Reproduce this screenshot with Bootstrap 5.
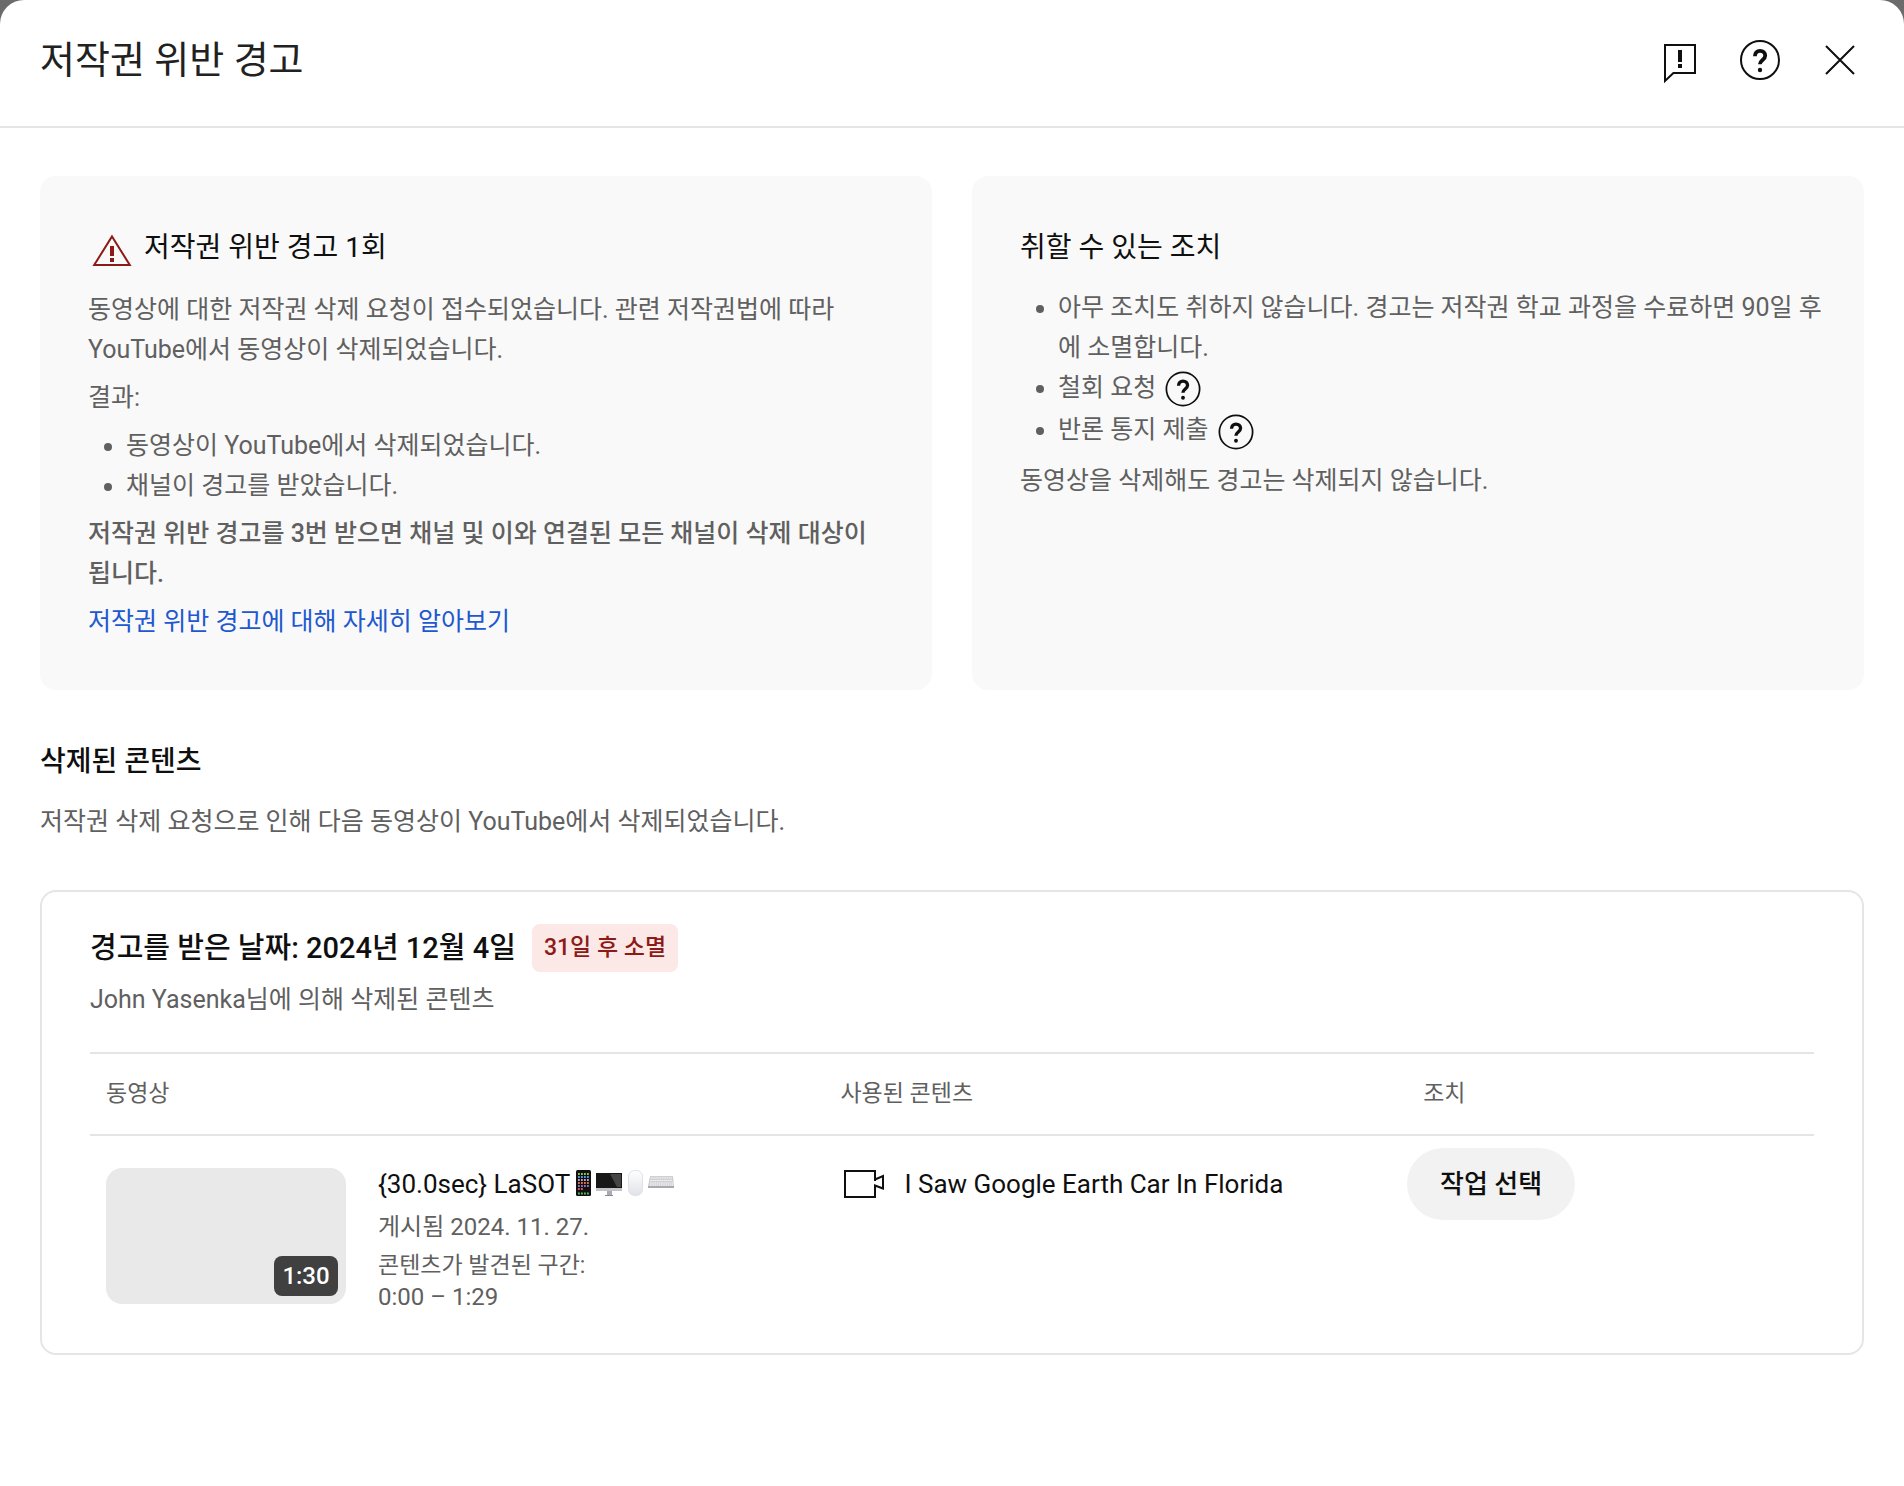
<!DOCTYPE html>
<html lang="ko">
<head>
<meta charset="utf-8">
<meta name="viewport" content="width=device-width, initial-scale=1">
<title>저작권 위반 경고</title>
<link href="https://cdn.jsdelivr.net/npm/bootstrap@5.3.0/dist/css/bootstrap.min.css" rel="stylesheet">
<style>
  body { background: #6b6b6b; color: #0f0f0f; font-family: Roboto, "Noto Sans CJK KR", sans-serif; font-size: 25px; line-height: 40px; }
  .sheet { background: #fff; border-radius: 24px 24px 0 0; }
  .sheet-head { padding: 36px 40px 42px; border-bottom: 2px solid #e5e5e5; }
  .sheet-title { font-size: 38px; line-height: 48px; font-weight: 400; color: #212121; }
  .sheet-body { padding: 48px 40px; }
  .head-tools { gap: 32px; }
  .icon-btn { width: 48px; height: 48px; color: #0f0f0f; }
  .icon-btn svg, .warn-icon { width: 48px; height: 48px; display: block; }
  .warn-icon { color: #8c1a17; }
  .info-grid { gap: 40px; }
  .panel { flex: 1 1 0; min-width: 0; background: #f9f9f9; border-radius: 16px; padding: 48px 32px 48px 48px; color: #606060; }
  .panel-title { font-size: 28px; line-height: 48px; font-weight: 400; color: #0f0f0f; margin-bottom: 16px; }
  .panel-title.with-icon { margin-bottom: 18px; }
  .panel p, .panel ul { margin-bottom: 8px; }
  .panel ul { padding-left: 38px; }
  .panel strong { font-weight: 500; }
  .more-link { color: #2158d0; }
  .help-link { display: inline-block; width: 42px; height: 42px; vertical-align: middle; color: #0f0f0f; }
  .help-link svg { width: 42px; height: 42px; display: block; }
  .section-title { font-size: 28px; line-height: 48px; font-weight: 500; margin: 48px 0 16px; }
  .soft { color: #606060; }
  .strike-card { margin-top: 48px; border: 2px solid #e5e5e5; border-radius: 16px; padding: 32px 48px 0; }
  .strike-date { font-size: 29px; line-height: 48px; font-weight: 500; }
  .expire-tag { font-size: 23px; line-height: 48px; font-weight: 500; color: #8c1a17; background: #fce8e6; border-radius: 8px; padding: 0 12px; }
  .claims { margin: 32px 0 0; table-layout: fixed; --bs-table-bg: transparent; }
  .claims > thead > tr > th { padding: 20px 16px; border: 0 solid #e5e5e5; border-width: 2px 0; font-size: 23px; line-height: 40px; font-weight: 400; color: #606060; }
  .claims > tbody > tr > td { border: 0; padding: 32px 16px 44px; }
  .claims > tbody > tr > td.act-cell { padding: 12px 0; }
  .thumb { width: 240px; height: 136px; background: #e9e9e9; border-radius: 16px; }
  .thumb-time { right: 8px; bottom: 8px; width: 64px; line-height: 40px; font-size: 24px; font-weight: 500; background: #404040; color: #fff; border-radius: 8px; }
  .vid-title { font-size: 26px; line-height: 32px; color: #0f0f0f; }
  .emoji { width: 26px; height: 26px; margin-top: 2px; flex: none; }
  .vid-date { font-size: 24px; margin-top: 7px; }
  .vid-note { font-size: 23px; line-height: 38px; }
  .vid-range { font-size: 24px; line-height: 24px; }
  .cam-icon { width: 48px; height: 32px; flex: none; }
  .act-btn { min-width: 168px; font-size: 26px; line-height: 72px; font-weight: 500; padding: 0 32px; border: 0; background: #f2f2f2; color: #0f0f0f; }
</style>
</head>
<body>
<svg class="d-none" xmlns="http://www.w3.org/2000/svg">
  <symbol id="i-help" viewBox="0 0 48 48">
    <circle cx="24" cy="24" r="19" fill="none" stroke="currentColor" stroke-width="2"/>
    <path d="M18.900 20.200c0-3.200 2-5.300 5.100-5.300s5.200 1.900 5.200 4.800c0 4.200-5.300 4.300-5.300 8.600" fill="none" stroke="currentColor" stroke-width="3.800"/>
    <circle cx="24" cy="34" r="2.200" fill="currentColor"/>
  </symbol>
</svg>

<main class="sheet min-vh-100">
  <header class="sheet-head d-flex align-items-center justify-content-between">
    <h1 class="sheet-title mb-0">저작권 위반 경고</h1>
    <div class="head-tools d-flex">
      <button type="button" class="icon-btn btn p-0 border-0" aria-label="의견 보내기">
        <svg viewBox="0 0 48 48"><path d="M9 9h30v28H17.400L9 45z" fill="none" stroke="currentColor" stroke-width="2"/><path d="M22 14h4v12h-4zM22 28h4v4h-4z" fill="currentColor"/></svg>
      </button>
      <button type="button" class="icon-btn btn p-0 border-0" aria-label="도움말"><svg><use href="#i-help"/></svg></button>
      <button type="button" class="icon-btn btn p-0 border-0" aria-label="닫기">
        <svg viewBox="0 0 48 48"><path d="M10 10l28 28M38 10L10 38" fill="none" stroke="currentColor" stroke-width="2"/></svg>
      </button>
    </div>
  </header>

  <div class="sheet-body">
    <div class="info-grid d-flex">
      <section class="panel">
        <h2 class="panel-title with-icon d-flex gap-2">
          <svg class="warn-icon" viewBox="0 0 48 48" aria-hidden="true"><path d="M24 12.500L41.800 41H6.200z" fill="none" stroke="currentColor" stroke-width="2"/><path d="M22 22h4v10h-4zM22 34h4v4h-4z" fill="currentColor"/></svg>
          <span>저작권 위반 경고 1회</span>
        </h2>
        <p>동영상에 대한 저작권 삭제 요청이 접수되었습니다. 관련 저작권법에 따라<br>YouTube에서 동영상이 삭제되었습니다.</p>
        <p>결과:</p>
        <ul>
          <li>동영상이 YouTube에서 삭제되었습니다.</li>
          <li>채널이 경고를 받았습니다.</li>
        </ul>
        <p><strong>저작권 위반 경고를 3번 받으면 채널 및 이와 연결된 모든 채널이 삭제 대상이<br>됩니다.</strong></p>
        <a class="more-link d-block text-decoration-none" href="#learn">저작권 위반 경고에 대해 자세히 알아보기</a>
      </section>

      <section class="panel">
        <h2 class="panel-title">취할 수 있는 조치</h2>
        <ul>
          <li>아무 조치도 취하지 않습니다. 경고는 저작권 학교 과정을 수료하면 90일 후<br>에 소멸합니다.</li>
          <li>철회 요청 <a class="help-link" href="#retract" aria-label="철회 요청 도움말"><svg><use href="#i-help"/></svg></a></li>
          <li>반론 통지 제출 <a class="help-link" href="#counter" aria-label="반론 통지 도움말"><svg><use href="#i-help"/></svg></a></li>
        </ul>
        <p>동영상을 삭제해도 경고는 삭제되지 않습니다.</p>
      </section>
    </div>

    <h2 class="section-title">삭제된 콘텐츠</h2>
    <p class="soft mb-0">저작권 삭제 요청으로 인해 다음 동영상이 YouTube에서 삭제되었습니다.</p>

    <section class="strike-card">
      <div class="d-flex align-items-center gap-3">
        <h3 class="strike-date mb-0">경고를 받은 날짜: 2024년 12월 4일</h3>
        <span class="expire-tag">31일 후 소멸</span>
      </div>
      <p class="soft mt-2 mb-0">John Yasenka님에 의해 삭제된 콘텐츠</p>

      <table class="claims table align-top">
        <colgroup><col style="width:42.6%"><col style="width:33.8%"><col></colgroup>
        <thead>
          <tr><th scope="col">동영상</th><th scope="col">사용된 콘텐츠</th><th scope="col">조치</th></tr>
        </thead>
        <tbody>
          <tr>
            <td>
              <div class="d-flex">
                <div class="thumb position-relative flex-shrink-0 me-3">
                  <span class="thumb-time position-absolute text-center">1:30</span>
                </div>
                <div class="ms-3 soft">
                  <div class="vid-title d-flex">
                    <span>{30.0sec} LaSOT</span>
                    <svg class="emoji" viewBox="0 0 26 26" role="img" aria-label="휴대전화"><rect x="6" y="0" width="15" height="26" rx="1.500" fill="#111"/><g stroke-width="1.800" stroke-dasharray="1.800 1.200"><path d="M8 4h11" stroke="#8fc45f"/><path d="M8 7h11" stroke="#5a9bd8"/><path d="M8 10h11" stroke="#b9a0d0"/><path d="M8 13h11" stroke="#e07048"/><path d="M8 16h11" stroke="#9a6fc0"/><path d="M8 19h6" stroke="#d85a50"/><path d="M8 23.500h11" stroke="#58bd68"/></g></svg>
                    <svg class="emoji" viewBox="0 0 26 26" role="img" aria-label="컴퓨터"><path d="M0 3h26v18H0z" fill="#c4c4c8"/><path d="M0 3h26v15H0z" fill="#181818"/><path d="M14 4h11v13h-4z" fill="#454545"/><path d="M11 21h5v4h-5z" fill="#aaaab0"/><path d="M9 25h8v1H9z" fill="#888890"/></svg>
                    <svg class="emoji" viewBox="0 0 26 26" role="img" aria-label="마우스"><defs><linearGradient id="g-mouse" x2="0" y2="1"><stop stop-color="#fff"/><stop offset="1" stop-color="#dfe2e7"/></linearGradient></defs><rect x="6.500" y=".500" width="14" height="25" rx="6" fill="url(#g-mouse)" stroke="#dfe1e4"/></svg>
                    <svg class="emoji" viewBox="0 0 26 26" role="img" aria-label="키보드"><path d="M2 6h23l1 10v2H0v-2z" fill="#d0d0d3"/><path d="M0 16h26v2H0z" fill="#a9a9ae"/><path d="M3 8h21M2.500 10.500h22M2 13h23M2 15h23" stroke="#f7f7f7" stroke-width="1.200" stroke-dasharray="1.600 .6"/></svg>
                  </div>
                  <div class="vid-date">게시됨 2024. 11. 27.</div>
                  <div class="vid-note">콘텐츠가 발견된 구간:</div>
                  <div class="vid-range">0:00 – 1:29</div>
                </div>
              </div>
            </td>
            <td>
              <div class="vid-title d-flex gap-3">
                <svg class="cam-icon" viewBox="0 0 48 32" aria-hidden="true"><path d="M35 13V3H5v26h30V17.500l8 3V8l-8 3.500" fill="none" stroke="#0f0f0f" stroke-width="2"/></svg>
                <span>I Saw Google Earth Car In Florida</span>
              </div>
            </td>
            <td class="act-cell"><button type="button" class="act-btn btn rounded-pill">작업 선택</button></td>
          </tr>
        </tbody>
      </table>
    </section>
  </div>
</main>
<script src="https://cdn.jsdelivr.net/npm/bootstrap@5.3.0/dist/js/bootstrap.bundle.min.js"></script>
</body>
</html>
